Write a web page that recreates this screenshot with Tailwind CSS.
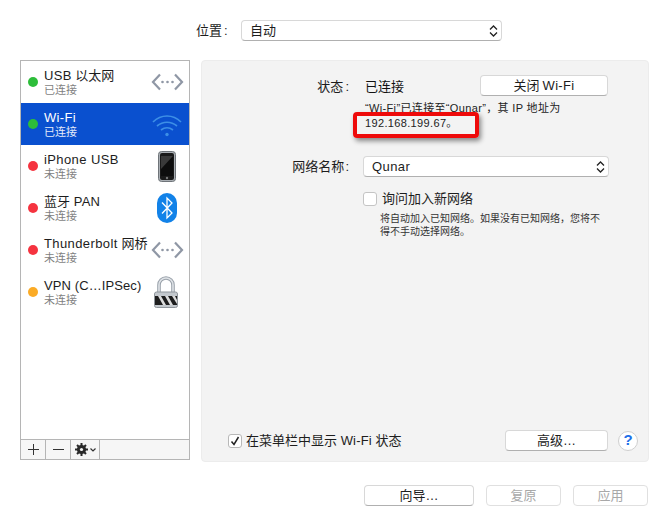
<!DOCTYPE html>
<html><head><meta charset="utf-8"><script src="https://cdn.jsdelivr.net/npm/@tailwindcss/browser@4"></script></head>
<body class="bg-white">
<div class="relative w-[668px] h-[525px] overflow-hidden bg-white text-[13px] text-[#1d1d1d] font-['Liberation_Sans','Noto_Sans_CJK_SC',sans-serif]">
  <!-- location -->
  <div class="flex items-center h-[21px] mt-5 ml-[196px]">
    <span class="w-[45px] leading-[21px]">位置<span class="ml-[2px]">:</span></span>
    <div class="w-[261px] h-[21px] flex items-center justify-between pl-2 pr-[3px] bg-white rounded-[4px] border border-[#d8d8d8] border-b-[#b0b0b0]">
      <span>自动</span>
      <svg width="9" height="14" viewBox="0 0 9 14" fill="none" stroke="#222" stroke-width="1.300"><path d="M1 5.500 4.500 2 8 5.500M1 8.500 4.500 12 8 8.500"/></svg>
    </div>
  </div>
  <div class="flex mt-[19px] ml-5 h-[402px]">
    <!-- sidebar -->
    <div class="w-[170px] h-[400px] border border-[#b5b5b5] flex flex-col">
      <div class="flex-1">
        <div class="h-[42px] flex items-center pl-[7px] pr-[5px]">
          <span class="w-[10px] h-[10px] rounded-full bg-[#2dbd3a]"></span>
          <div class="ml-[6px] flex-1 leading-[15px] pt-[2px] whitespace-nowrap"><div><span class="tracking-[0.3px]">USB</span> 以太网</div><div class="text-[11px] text-[#7f7f7f]">已连接</div></div>
          <svg width="33" height="18" viewBox="0 0 33 18" fill="none" stroke="#8f97a5" stroke-width="2.200"><path d="M9 1.500 2 9l7 7.500M24 1.500 31 9l-7 7.500"/><circle cx="11.500" cy="9" r="1.300" fill="#8f97a5" stroke="none"/><circle cx="16.500" cy="9" r="1.300" fill="#8f97a5" stroke="none"/><circle cx="21.500" cy="9" r="1.300" fill="#8f97a5" stroke="none"/></svg>
        </div>
        <div class="h-[42px] flex items-center pl-[7px] pr-[5px] bg-[#0a50cf] text-white">
          <span class="w-[10px] h-[10px] rounded-full bg-[#2dbd3a]"></span>
          <div class="ml-[6px] flex-1 leading-[15px] pt-[2px]"><div class="tracking-[0.3px]">Wi-Fi</div><div class="text-[11px] text-[#e3ebfa]">已连接</div></div>
          <svg class="mr-[2px] mt-[2px]" width="30" height="23" viewBox="0 0 30 23" fill="none" stroke="#3d8fe6" stroke-width="1.700"><path d="M1 8C9 0 21 0 29 8M5 12c6-5 14-5 20 0M9 16c4-3 8-3 12 0"/><circle cx="15" cy="20.500" r="1.700" fill="#3d8fe6" stroke="none"/></svg>
        </div>
        <div class="h-[42px] flex items-center pl-[7px] pr-[5px]">
          <span class="w-[10px] h-[10px] rounded-full bg-[#f5333f]"></span>
          <div class="ml-[6px] flex-1 leading-[15px] pt-[2px]"><div class="tracking-[0.4px]">iPhone USB</div><div class="text-[11px] text-[#7f7f7f]">未连接</div></div>
          <svg class="mr-[8px]" width="18" height="31" viewBox="0 0 18 31"><rect x=".5" y=".5" width="17" height="30" rx="3" fill="#a9aeb3" stroke="#6f7479"/><rect x="2" y="2" width="14" height="27" rx="2" fill="#1a1a1a"/><rect x="3" y="5" width="12" height="20" fill="#0d0d0d"/><path d="M3 5h12L3 18z" fill="#3a3a3a"/><circle cx="9" cy="27" r="1.200" fill="#777"/></svg>
        </div>
        <div class="h-[42px] flex items-center pl-[7px] pr-[5px]">
          <span class="w-[10px] h-[10px] rounded-full bg-[#f5333f]"></span>
          <div class="ml-[6px] flex-1 leading-[15px] pt-[2px]"><div>蓝牙 <span class="tracking-[0.3px]">PAN</span></div><div class="text-[11px] text-[#7f7f7f]">未连接</div></div>
          <svg class="mr-[7px]" width="20" height="30" viewBox="0 0 20 30"><rect width="20" height="30" rx="10" fill="#1282e8"/><path d="M5 9.500 15 20l-5 5V5l5 5L5 20.500" fill="none" stroke="#fff" stroke-width="1.300"/></svg>
        </div>
        <div class="h-[42px] flex items-center pl-[7px] pr-[5px]">
          <span class="w-[10px] h-[10px] rounded-full bg-[#f5333f]"></span>
          <div class="ml-[6px] flex-1 leading-[15px] pt-[2px] whitespace-nowrap"><div><span class="tracking-[0.4px]">Thunderbolt</span> 网桥</div><div class="text-[11px] text-[#7f7f7f]">未连接</div></div>
          <svg width="33" height="18" viewBox="0 0 33 18" fill="none" stroke="#8f97a5" stroke-width="2.200"><path d="M9 1.500 2 9l7 7.500M24 1.500 31 9l-7 7.500"/><circle cx="11.500" cy="9" r="1.300" fill="#8f97a5" stroke="none"/><circle cx="16.500" cy="9" r="1.300" fill="#8f97a5" stroke="none"/><circle cx="21.500" cy="9" r="1.300" fill="#8f97a5" stroke="none"/></svg>
        </div>
        <div class="h-[42px] flex items-center pl-[7px] pr-[5px]">
          <span class="w-[10px] h-[10px] rounded-full bg-[#fbab26]"></span>
          <div class="ml-[6px] flex-1 leading-[15px] pt-[2px] whitespace-nowrap"><div class="tracking-[0.1px]">VPN (C…IPSec)</div><div class="text-[11px] text-[#7f7f7f]">未连接</div></div>
          <svg class="mr-[6px]" width="24" height="32" viewBox="0 0 24 32"><path d="M5 17V9a7 7 0 0 1 14 0v8" fill="none" stroke="#9aa2ab" stroke-width="3.600"/><path d="M5 17V9a7 7 0 0 1 14 0v8" fill="none" stroke="#dfe3e7" stroke-width="1.600"/><rect x=".5" y="16" width="23" height="15.500" rx="2" fill="#c3c8cd" stroke="#8f959b"/><rect x="1" y="20" width="22" height="9" fill="#1e1e1e"/><path d="M4 20h3l5 9H9zM11 20h3l5 9h-3zM18 20h3l2 4v4z" fill="#dcdcdc"/></svg>
        </div>
      </div>
      <div class="h-[20px] border-t border-[#b5b5b5] flex bg-[#f6f6f6]">
        <div class="w-[25px] border-r border-[#b5b5b5] flex items-center justify-center"><svg width="11" height="11" stroke="#333"><path d="M5.500 0v11M0 5.500h11"/></svg></div>
        <div class="w-[25px] border-r border-[#b5b5b5] flex items-center justify-center"><svg width="11" height="11" stroke="#333"><path d="M0 5.500h11"/></svg></div>
        <div class="w-[29px] border-r border-[#b5b5b5] flex items-center justify-center gap-[2px]"><svg width="13" height="13" viewBox="0 0 13 13"><circle cx="6.500" cy="6.500" r="3.300" fill="none" stroke="#2a2a2a" stroke-width="2.600"/><path d="M6.500 0v13M0 6.500h13M2 2l9 9M11 2l-9 9" stroke="#2a2a2a" stroke-width="2"/><circle cx="6.500" cy="6.500" r="1.600" fill="#f6f6f6"/></svg><svg width="6" height="4" fill="none" stroke="#333" stroke-width="1.200"><path d="M.5.500 3 3 5.500.5"/></svg></div>
      </div>
    </div>
    <!-- panel -->
    <div class="relative ml-[11px] w-[448px] h-[402px] bg-[#f3f3f3] rounded-[4px] border border-[#ececec]">
      <div class="flex mt-[14px]">
        <div class="w-[147px] text-right leading-[24px]">状态<span class="ml-[2px]">:</span></div>
        <div class="w-[115px] ml-[16px] leading-[24px] text-[#111]">已连接</div>
        <div class="w-[128px] h-[21px] bg-white rounded-[4px] border border-[#d8d8d8] border-b-[#b0b0b0] flex items-center justify-center">关闭 <span class="ml-[3px] tracking-[0.3px]">Wi-Fi</span></div>
      </div>
      <div class="ml-[163px] mt-[2px] text-[11px] leading-[15px] text-[#222] tracking-[0.35px] whitespace-nowrap">“Wi-Fi”已连接至“Qunar”，其 IP 地址为<br>192.168.199.67。</div>
      <div class="flex items-center mt-[25px] h-[21px]">
        <div class="w-[147px] text-right">网络名称<span class="ml-[1px]">:</span></div>
        <div class="ml-[14px] w-[246px] h-[21px] bg-white rounded-[4px] border border-[#d8d8d8] border-b-[#b0b0b0] flex items-center justify-between pl-2 pr-[3px]"><span class="tracking-[0.4px]">Qunar</span><svg width="9" height="14" viewBox="0 0 9 14" fill="none" stroke="#222" stroke-width="1.300"><path d="M1 5.500 4.500 2 8 5.500M1 8.500 4.500 12 8 8.500"/></svg></div>
      </div>
      <div class="flex items-center mt-[14px] ml-[161px] h-[16px]">
        <span class="w-[14px] h-[14px] bg-white rounded-[3px] border border-[#c4c4c4]"></span>
        <span class="ml-[5px]">询问加入新网络</span>
      </div>
      <div class="ml-[178px] mt-[5px] text-[10px] leading-[13px] text-[#333] whitespace-nowrap">将自动加入已知网络。如果没有已知网络，您将不<br>得不手动选择网络。</div>
      <div class="absolute left-[26px] right-[10px] bottom-[10px] h-[21px] flex items-center">
        <span class="w-[14px] h-[14px] bg-white rounded-[3px] border border-[#b8b8b8] flex items-center justify-center"><svg width="10" height="10" fill="none" stroke="#222" stroke-width="1.500"><path d="M1.500 5.500 4 8.500 8.500 1"/></svg></span>
        <span class="ml-[4px] flex-1 whitespace-nowrap">在菜单栏中显示 <span class="tracking-[0.2px]">Wi-Fi</span> 状态</span>
        <div class="w-[103px] h-[21px] bg-white rounded-[4px] border border-[#d8d8d8] border-b-[#b0b0b0] flex items-center justify-center">高级…</div>
        <div class="ml-[10px] w-[20px] h-[20px] rounded-full bg-white border border-[#cfcfcf] flex items-center justify-center font-bold text-[15px] text-[#1f6fe8]">?</div>
      </div>
    </div>
  </div>
  <!-- bottom buttons -->
  <div class="flex mt-[23px] ml-[364px]">
    <div class="w-[110px] h-[21px] bg-white rounded-[4px] border border-[#d8d8d8] border-b-[#b0b0b0] flex items-center justify-center">向导…</div>
    <div class="ml-3 w-[75px] h-[21px] rounded-[4px] border border-[#e0e0e0] flex items-center justify-center text-[#a8a8a8]">复原</div>
    <div class="ml-3 w-[75px] h-[21px] rounded-[4px] border border-[#e0e0e0] flex items-center justify-center text-[#a8a8a8]">应用</div>
  </div>
  <!-- red annotation -->
  <div class="absolute left-[353px] top-[112px] w-[126px] h-[26px] border-[4px] border-[#ee0a0a] rounded-[4px] shadow-[2px_3px_5px_rgba(0,0,0,0.45)]"></div>
</div>
</body></html>
